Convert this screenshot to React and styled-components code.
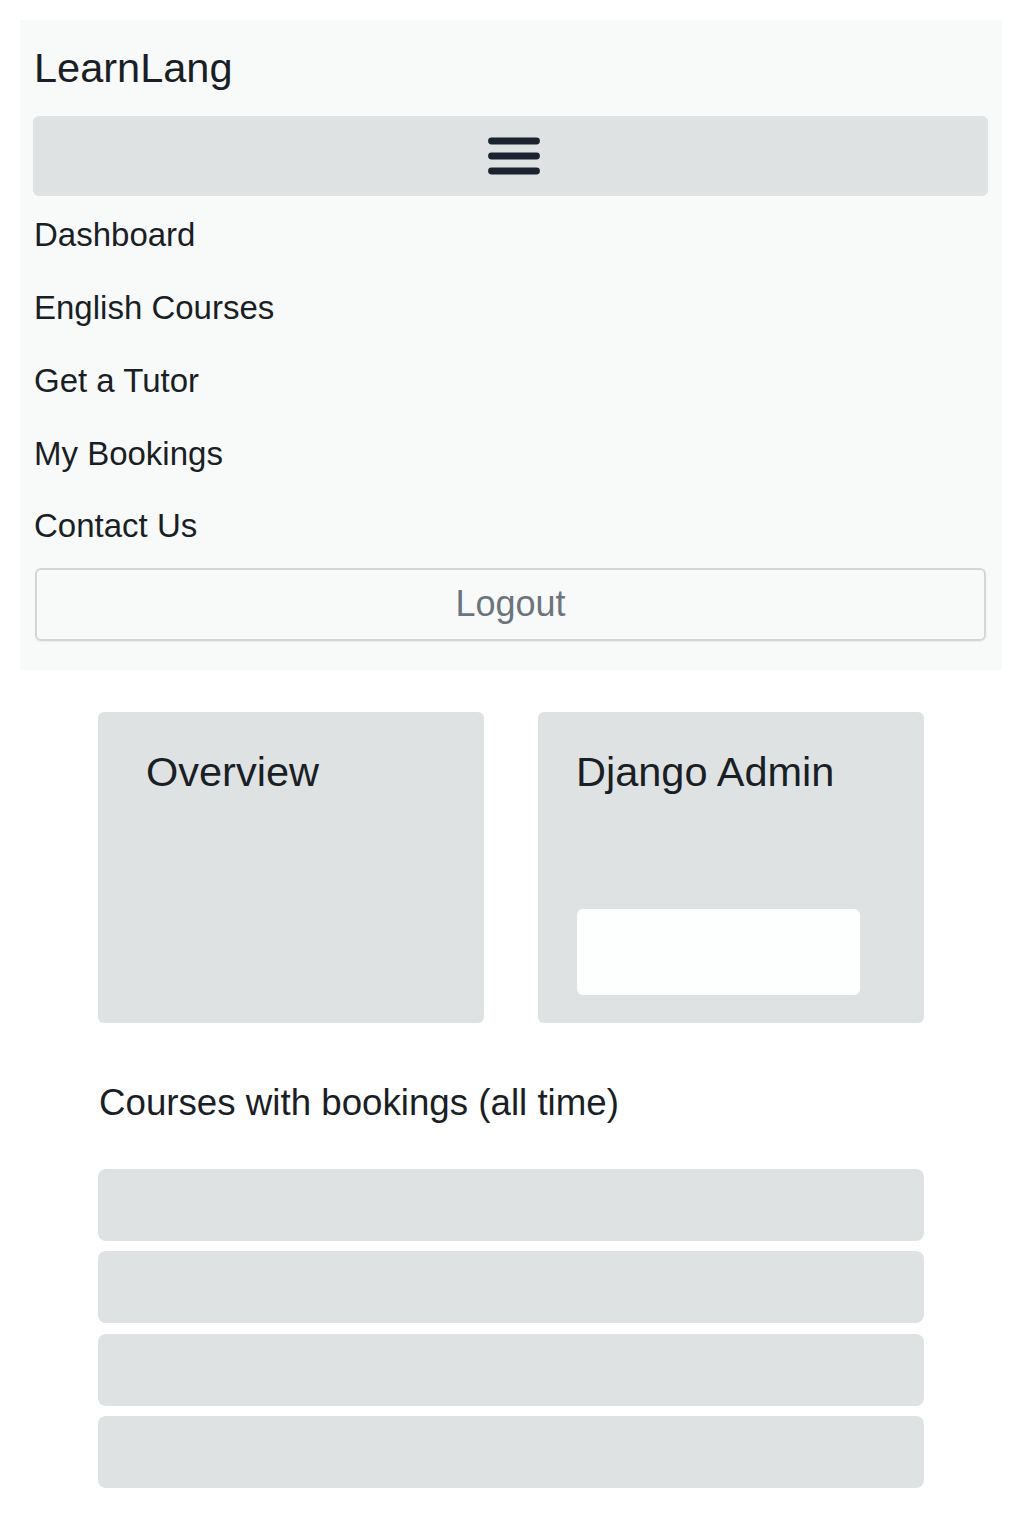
import React from "react";
import styled, { createGlobalStyle } from "styled-components";

const TEXT = "#1a1e25";
const GREY = "#dfe2e3";

const GlobalStyle = createGlobalStyle`
  body {
    margin: 0;
    background: #ffffff;
    font-family: "Liberation Sans", Arial, sans-serif;
    color: ${TEXT};
  }
`;

const Page = styled.div`
  padding: 20px 22px 40px 20px;
`;

const Navbar = styled.nav`
  background: #f8fafa;
  padding: 18px 14px 29px 13px;
  display: flex;
  flex-direction: column;
`;

const Brand = styled.a`
  font-size: 41.5px;
  line-height: 60px;
  margin-bottom: 18px;
  padding-left: 1px;
  color: ${TEXT};
  text-decoration: none;
`;

const Toggler = styled.button`
  height: 80px;
  width: 100%;
  border: none;
  border-radius: 6px;
  background: ${GREY};
  display: flex;
  align-items: center;
  justify-content: center;
  padding: 0 0 0 6px;
`;

const NavList = styled.ul`
  list-style: none;
  margin: 3px 0 0;
  padding: 0 0 0 1px;
`;

const NavItem = styled.li`
  height: 72.75px;
  display: flex;
  align-items: center;
  font-size: 33px;
  color: ${TEXT};
`;

const LogoutButton = styled.button`
  margin: 5px 2px 0;
  height: 73px;
  border: 2px solid #d2d6d9;
  border-radius: 6px;
  background: transparent;
  color: #6c757d;
  font-family: inherit;
  font-size: 36px;
  box-shadow: 0 1px 2px rgba(0, 0, 0, 0.06);
`;

const Main = styled.main`
  width: 826px;
  margin: 42px auto 0;
`;

const CardRow = styled.div`
  display: grid;
  grid-template-columns: 386px 386px;
  justify-content: space-between;
`;

const Card = styled.section`
  height: 311px;
  box-sizing: border-box;
  background: ${GREY};
  border-radius: 6px;
  padding: 36px 0 28px ${({ $inset }) => $inset}px;
  display: flex;
  flex-direction: column;
`;

const CardTitle = styled.h2`
  margin: 0;
  font-size: 41.5px;
  line-height: 48px;
  font-weight: 400;
  color: ${TEXT};
`;

const AdminLink = styled.div`
  margin-top: auto;
  margin-left: 1px;
  width: 283px;
  height: 86px;
  background: #fdfefe;
  border-radius: 6px;
`;

const SectionTitle = styled.h3`
  margin: 58px 0 44px 1px;
  font-size: 36.7px;
  line-height: 44px;
  font-weight: 400;
  color: ${TEXT};
`;

const CourseList = styled.div`
  display: flex;
  flex-direction: column;
  gap: 10.5px;
`;

const CourseRow = styled.div`
  height: 72px;
  background: ${GREY};
  border-radius: 8px;
`;

const MenuIcon = () => (
  <svg width="52" height="38" viewBox="0 0 52 38">
    <g stroke="#1b2230" strokeWidth="6.8" strokeLinecap="round">
      <line x1="3.5" y1="4" x2="48.5" y2="4" />
      <line x1="3.5" y1="19" x2="48.5" y2="19" />
      <line x1="3.5" y1="34" x2="48.5" y2="34" />
    </g>
  </svg>
);

const links = ["Dashboard", "English Courses", "Get a Tutor", "My Bookings", "Contact Us"];

export default function App() {
  return (
    <>
      <GlobalStyle />
      <Page>
        <Navbar>
          <Brand>LearnLang</Brand>
          <Toggler aria-label="Toggle navigation">
            <MenuIcon />
          </Toggler>
          <NavList>
            {links.map((l) => (
              <NavItem key={l}>{l}</NavItem>
            ))}
          </NavList>
          <LogoutButton>Logout</LogoutButton>
        </Navbar>
        <Main>
          <CardRow>
            <Card $inset={48}>
              <CardTitle>Overview</CardTitle>
            </Card>
            <Card $inset={38}>
              <CardTitle>Django Admin</CardTitle>
              <AdminLink />
            </Card>
          </CardRow>
          <SectionTitle>Courses with bookings (all time)</SectionTitle>
          <CourseList>
            {[0, 1, 2, 3].map((i) => (
              <CourseRow key={i} />
            ))}
          </CourseList>
        </Main>
      </Page>
    </>
  );
}
